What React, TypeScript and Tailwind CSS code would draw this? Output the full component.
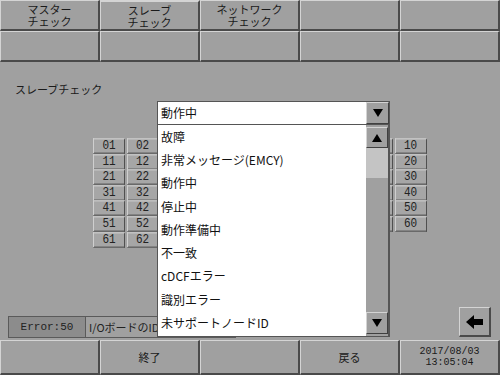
import React from 'react';

const jp = { fontFamily: '"Noto Sans CJK JP", "Liberation Sans", sans-serif' };
const mono = { fontFamily: '"Liberation Mono", "Noto Sans CJK JP", monospace' };

const bevel =
  'border-t border-l border-t-[#d4d4d4] border-l-[#d4d4d4] border-b-2 border-r-2 border-b-[#4a4a4a] border-r-[#4a4a4a] bg-[#a0a0a0]';

const NavButton: React.FC<{ label?: string[]; selected?: boolean }> = ({ label, selected }) => (
  <div
    className={`${bevel} flex flex-col items-center justify-center text-[11px] leading-[12px] text-[#1a1a1a] ${
      selected ? 'border-t-2 border-t-[#4a4a4a]' : ''
    }`}
    style={jp}
  >
    {label?.map((l) => <span key={l}>{l}</span>)}
  </div>
);

const items = [
  '故障',
  '非常メッセージ(EMCY)',
  '動作中',
  '停止中',
  '動作準備中',
  '不一致',
  'cDCFエラー',
  '識別エラー',
  '未サポートノードID',
];

const nodes: number[][] = Array.from({ length: 7 }, (_, r) =>
  Array.from({ length: r === 6 ? 3 : 10 }, (_, c) => r * 10 + c + 1)
);

const App: React.FC = () => {
  return (
    <div className="relative w-[500px] h-[375px] bg-[#a0a0a0] flex flex-col overflow-hidden">
      {/* Top navigation */}
      <div className="grid grid-cols-5 grid-rows-[31px_31px] h-[62px]">
        <NavButton label={['マスター', 'チェック']} />
        <NavButton label={['スレーブ', 'チェック']} selected />
        <NavButton label={['ネットワーク', 'チェック']} />
        <NavButton />
        <NavButton />
        <NavButton />
        <NavButton />
        <NavButton />
        <NavButton />
        <NavButton />
      </div>

      {/* Main */}
      <div className="flex-1 flex flex-col">
        <div className="pl-[15px] pt-[20px] text-[11px] leading-[14px] text-[#1a1a1a]" style={jp}>
          スレーブチェック
        </div>

        {/* Node grid */}
        <div className="ml-[93px] mt-[43px] flex flex-col gap-y-[1.6px]">
          {nodes.map((row, i) => (
            <div key={i} className="flex gap-x-[1.5px]">
              {row.map((n) => (
                <div
                  key={n}
                  className="w-[32px] h-[14px] border-t border-l border-t-[#cfcfcf] border-l-[#cfcfcf] border-b border-r border-b-[#505050] border-r-[#505050] bg-[#a6a6a6] flex items-center justify-center text-[11px] leading-none text-[#222] scale-y-110"
                  style={mono}
                >
                  {String(n).padStart(2, '0')}
                </div>
              ))}
            </div>
          ))}
        </div>

        {/* Status row */}
        <div className="mt-auto mb-[2px] flex items-end pr-[9px]">
          <div
            className="ml-[8px] w-[78px] h-[22px] border border-[#5a5a5a] bg-[#8c8c8c] flex items-center justify-center text-[11px] text-[#222]"
            style={mono}
          >
            Error:50
          </div>
          <div
            className="w-[150px] h-[22px] border border-[#5a5a5a] border-l-0 bg-[#a0a0a0] flex items-center pl-[3px] text-[11px] text-[#222] whitespace-nowrap overflow-hidden"
            style={jp}
          >
            I/OボードのIDが一致しません
          </div>
          <div className="ml-auto w-[32px] h-[30px] mb-[1px] flex items-center justify-center border-t border-l border-t-[#d4d4d4] border-l-[#d4d4d4] border-b-2 border-r-2 border-b-[#4a4a4a] border-r-[#4a4a4a] bg-[#a0a0a0]">
            <svg width="18" height="14" viewBox="0 0 18 14">
              <path d="M0 7 L8 0 L8 4 L17 4 L17 10 L8 10 L8 14 Z" fill="#000" />
            </svg>
          </div>
        </div>
      </div>

      {/* Bottom bar */}
      <div className="grid grid-cols-5 h-[35px]">
        <NavButton />
        <NavButton label={['終了']} />
        <NavButton />
        <NavButton label={['戻る']} />
        <div
          className={`${bevel} flex flex-col items-center justify-center text-[10px] leading-[11px] text-[#1a1a1a]`}
          style={mono}
        >
          <span>2017/08/03</span>
          <span>13:05:04</span>
        </div>
      </div>

      {/* Dropdown overlay */}
      <div className="absolute left-[157px] top-[101px] w-[233px] flex flex-col" style={jp}>
        <div className="h-[24px] bg-white border border-[#555] flex items-center">
          <span className="flex-1 pl-[3px] text-[12px] text-[#111]">動作中</span>
          <div className="w-[23px] h-[22px] border-t border-l border-t-[#d4d4d4] border-l-[#d4d4d4] border-b border-r border-b-[#404040] border-r-[#404040] bg-[#a0a0a0] flex items-center justify-center">
            <svg width="10" height="8" viewBox="0 0 10 8">
              <path d="M0 0 L10 0 L5 8 Z" fill="#000" />
            </svg>
          </div>
        </div>
        <div className="h-[212px] bg-white border-l border-b border-[#555] border-r-2 border-r-[#555] flex">
          <div className="flex-1 flex flex-col">
            {items.map((it) => (
              <div key={it} className="h-[23.3px] flex items-center pl-[3px] text-[12px] text-[#111] whitespace-nowrap">
                {it}
              </div>
            ))}
          </div>
          <div className="w-[22px] flex flex-col pt-[2px] pb-[2px] bg-[#a0a0a0]">
            <div className="h-[21px] border-t border-l border-t-[#d4d4d4] border-l-[#d4d4d4] border-b border-r border-b-[#404040] border-r-[#404040] bg-[#a0a0a0] flex items-center justify-center">
              <svg width="10" height="8" viewBox="0 0 10 8">
                <path d="M0 8 L10 8 L5 0 Z" fill="#000" />
              </svg>
            </div>
            <div className="h-[30px] bg-[#c4c4c4]" />
            <div className="flex-1 bg-[#a0a0a0]" />
            <div className="h-[22px] border-t border-l border-t-[#d4d4d4] border-l-[#d4d4d4] border-b border-r border-b-[#404040] border-r-[#404040] bg-[#a0a0a0] flex items-center justify-center">
              <svg width="10" height="8" viewBox="0 0 10 8">
                <path d="M0 0 L10 0 L5 8 Z" fill="#000" />
              </svg>
            </div>
          </div>
        </div>
      </div>
    </div>
  );
};

export default App;
